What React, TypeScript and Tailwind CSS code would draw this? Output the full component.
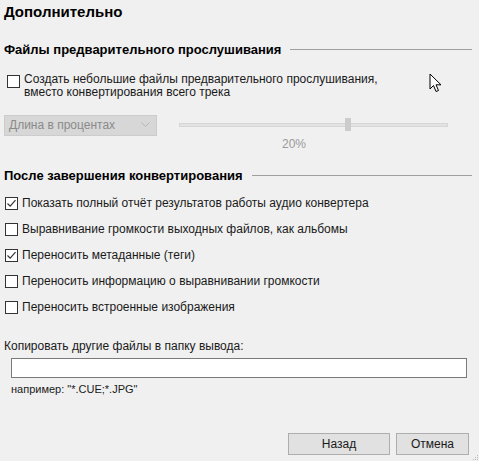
import React from "react";

function Box({ checked }: { checked?: boolean }) {
  return (
    <span className="w-[13px] h-[13px] border border-[#333] bg-white shrink-0 flex items-center justify-center">
      {checked && (
        <svg width="11" height="11" viewBox="0 0 11 11">
          <path d="M1.5 5.5 L4.2 8.2 L9.5 2.2" fill="none" stroke="#333" strokeWidth="1.2" />
        </svg>
      )}
    </span>
  );
}

function Check({ label, checked }: { label: string; checked?: boolean }) {
  return (
    <div className="flex items-center gap-[4px] h-[26px] pl-[1px]">
      <Box checked={checked} />
      <span>{label}</span>
    </div>
  );
}

function Heading({ text, className }: { text: string; className?: string }) {
  return (
    <div className={`flex items-center gap-[9px] pr-[7px] ${className ?? ""}`}>
      <span className="font-bold text-[13px] text-black whitespace-nowrap">{text}</span>
      <div className="flex-1 h-px bg-[#a0a0a0]" />
    </div>
  );
}

export default function App() {
  return (
    <div
      className="relative w-[479px] h-[461px] bg-[#f0f0f0] text-[12px] text-[#1a1a1a] overflow-hidden"
      style={{ fontFamily: '"Liberation Sans", Arial, sans-serif' }}
    >
      <div className="pl-[4px] pt-[2px]">
        <div className="font-bold text-[15px] text-black h-[20px] leading-[20px]">Дополнительно</div>

        <Heading text="Файлы предварительного прослушивания" className="mt-[18px]" />

        <div className="flex items-start gap-[4px] mt-[13px] pl-[3px] leading-[13px]">
          <span className="mt-[2px]"><Box /></span>
          <span>
            Создать небольшие файлы предварительного прослушивания,
            <br />
            вместо конвертирования всего трека
          </span>
        </div>

        <div className="flex items-start mt-[16px]">
          <div className="w-[153px] h-[21px] bg-[#d7d7d7] border border-[#cccccc] flex items-center justify-between pl-[4px] pr-[6px] text-[#8a8a8a]">
            <span>Длина в процентах</span>
            <svg width="9" height="6" viewBox="0 0 9 6">
              <path d="M0.5 0.5 L4.5 4.5 L8.5 0.5" fill="none" stroke="#b5b5b5" strokeWidth="1" />
            </svg>
          </div>
          <div className="ml-[22px] w-[269px] flex flex-col items-center">
            <div className="relative w-full h-[20px] flex items-center">
              <div className="w-full h-[4px] bg-[#e3e3e3] border border-[#d6d6d6]" />
              <div className="absolute left-[166px] top-[3px] w-[6px] h-[13px] bg-[#cccccc]" />
            </div>
            <div className="text-[#9a9a9a] mr-[39px]">20%</div>
          </div>
        </div>

        <Heading text="После завершения конвертирования" className="mt-[13px]" />

        <div className="mt-[5px]">
          <Check label="Показать полный отчёт результатов работы аудио конвертера" checked />
          <Check label="Выравнивание громкости выходных файлов, как альбомы" />
          <Check label="Переносить метаданные (теги)" checked />
          <Check label="Переносить информацию о выравнивании громкости" />
          <Check label="Переносить встроенные изображения" />
        </div>

        <div className="mt-[17px]">Копировать другие файлы в папку вывода:</div>
        <div className="ml-[7px] mr-[12px] mt-[3px] h-[20px] bg-white border border-[#7a7a7a]" />
        <div className="ml-[7px] mt-[3px] text-[11px]">например: "*.CUE;*.JPG"</div>
      </div>

      <div className="absolute right-[10px] bottom-[6px] flex gap-[6px]">
        <button className="w-[102px] h-[22px] bg-[#e1e1e1] border border-[#adadad] text-[12px]">Назад</button>
        <button className="w-[73px] h-[22px] bg-[#e1e1e1] border border-[#adadad] text-[12px]">Отмена</button>
      </div>
      <svg className="absolute right-0 bottom-0" width="8" height="8" viewBox="0 0 8 8">
        <rect x="6" y="2" width="1" height="1" fill="#b8b8b8" />
        <rect x="4" y="4" width="1" height="1" fill="#b8b8b8" />
        <rect x="6" y="4" width="1" height="1" fill="#b8b8b8" />
        <rect x="2" y="6" width="1" height="1" fill="#b8b8b8" />
        <rect x="4" y="6" width="1" height="1" fill="#b8b8b8" />
        <rect x="6" y="6" width="1" height="1" fill="#b8b8b8" />
      </svg>

      <svg className="absolute left-[429px] top-[73px]" width="16" height="21" viewBox="0 0 16 21">
        <path d="M1 1 L1 16 L4.5 12.5 L7 18.5 L9.5 17.5 L7 11.8 L12 11.8 Z" fill="white" stroke="black" strokeWidth="1" strokeLinejoin="miter" />
      </svg>
    </div>
  );
}
